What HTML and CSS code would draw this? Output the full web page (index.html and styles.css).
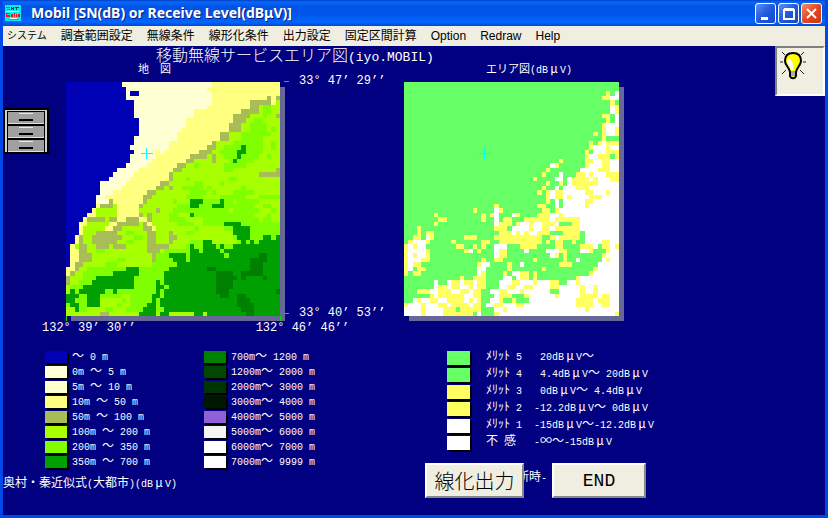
FILE: index.html
```html
<!DOCTYPE html>
<html lang="ja">
<head>
    <meta charset="UTF-8">
    <meta name="viewport" content="width=device-width, initial-scale=1.0">
    <title>Mobil</title>
    <link rel="stylesheet" href="styles.css">
</head>
<body>
    <header class="titlebar">
        <svg class="app-icon" width="16" height="16" viewBox="0 0 16 16" shape-rendering="crispEdges" aria-hidden="true">
            <rect width="16" height="16" fill="#00f0f0"/>
            <path d="M1 8h4v1h-3v1h3v2h-4zM6 9h2v3h-2zM9 8h1v4h-1zM11 9h1v3h-1zM13 9h2v3h-2z" fill="#d02020"/>
            <path d="M1 2h4v1h-4zM2 4h3v1h-3z" fill="#a06020"/>
            <path d="M6 2h1v3h-1zM8 2h1v3h-1zM6 3h3v1h-3zM10 2h4v1h-4zM11 3h1v2h-1z" fill="#104060"/>
            <path d="M1 6h13v1h-13zM5 13h7v1h-7z" fill="#f8fff8"/>
            <path d="M3 14h10v1h-10z" fill="#20c040"/>
        </svg>
        <h1>Mobil [SN(dB) or Receive Level(dBμV)]</h1>
        <div class="window-buttons">
            <button aria-label="Minimize"><svg width="19" height="19"><path d="M5 13h7v3h-7z" fill="#fff"/></svg></button>
            <button aria-label="Maximize"><svg width="19" height="19"><path d="M5 6h10v9h-10zM5 5h10" fill="none" stroke="#fff" stroke-width="2"/></svg></button>
            <button class="close" aria-label="Close"><svg width="19" height="19"><path d="M5 5l9 9M14 5l-9 9" stroke="#fff" stroke-width="2"/></svg></button>
        </div>
    </header>
    <nav class="menu">
        <button class="kana">システム</button>
        <button>調査範囲設定</button>
        <button>無線条件</button>
        <button>線形化条件</button>
        <button>出力設定</button>
        <button>固定区間計算</button>
        <button>Option</button>
        <button>Redraw</button>
        <button>Help</button>
    </nav>
    <main class="client">
        <h2>移動無線サービスエリア図<span class="mono">(iyo.MOBIL)</span></h2>

        <div class="maps">
            <div class="caption">地　図</div>
            <div class="caption area">エリア図<span class="mono">(dB<span class="w">μ</span>V)</span></div>
            <canvas id="terrain" width="214" height="234"></canvas>
            <div class="latitude">
                <span>33° 47’ 29’’</span>
                <span>33° 40’ 53’’</span>
            </div>
            <canvas id="area" width="215" height="234"></canvas>
        </div>
        <div class="longitude">
            <span>132° 39’ 30’’</span>
            <span>132° 46’ 46’’</span>
        </div>

        <div class="legends">
            <ul class="legend">
                <li><i class="sea"></i><span><span class="w">～</span> 0 m</span></li>
                <li><i class="h0"></i><span>0m <span class="w">～</span> 5 m</span></li>
                <li><i class="h5"></i><span>5m <span class="w">～</span> 10 m</span></li>
                <li><i class="h10"></i><span>10m <span class="w">～</span> 50 m</span></li>
                <li><i class="h50"></i><span>50m <span class="w">～</span> 100 m</span></li>
                <li><i class="h100"></i><span>100m <span class="w">～</span> 200 m</span></li>
                <li><i class="h200"></i><span>200m <span class="w">～</span> 350 m</span></li>
                <li><i class="h350"></i><span>350m <span class="w">～</span> 700 m</span></li>
            </ul>
            <ul class="legend">
                <li><i class="h700"></i><span>700m<span class="w">～</span> 1200 m</span></li>
                <li><i class="h1200"></i><span>1200m<span class="w">～</span> 2000 m</span></li>
                <li><i class="h2000"></i><span>2000m<span class="w">～</span> 3000 m</span></li>
                <li><i class="h3000"></i><span>3000m<span class="w">～</span> 4000 m</span></li>
                <li><i class="h4000"></i><span>4000m<span class="w">～</span> 5000 m</span></li>
                <li><i class="h5000"></i><span>5000m<span class="w">～</span> 6000 m</span></li>
                <li><i class="h6000"></i><span>6000m<span class="w">～</span> 7000 m</span></li>
                <li><i class="h6000"></i><span>7000m<span class="w">～</span> 9999 m</span></li>
            </ul>
            <ul class="legend merit">
                <li><i class="good"></i><b><span class="k">ﾒﾘｯﾄ</span> 5</b><span> 20dB<span class="w">μ</span>V<span class="w">～</span></span></li>
                <li><i class="good"></i><b><span class="k">ﾒﾘｯﾄ</span> 4</b><span> 4.4dB<span class="w">μ</span>V<span class="w">～</span> 20dB<span class="w">μ</span>V</span></li>
                <li><i class="fair"></i><b><span class="k">ﾒﾘｯﾄ</span> 3</b><span> 0dB<span class="w">μ</span>V<span class="w">～</span> 4.4dB<span class="w">μ</span>V</span></li>
                <li><i class="fair"></i><b><span class="k">ﾒﾘｯﾄ</span> 2</b><span>-12.2dB<span class="w">μ</span>V<span class="w">～</span> 0dB<span class="w">μ</span>V</span></li>
                <li><i class="poor"></i><b><span class="k">ﾒﾘｯﾄ</span> 1</b><span>-15dB<span class="w">μ</span>V<span class="w">～</span>-12.2dB<span class="w">μ</span>V</span></li>
                <li><i class="poor"></i><b><span class="k">不</span> <span class="k">感</span></b><span>-<span class="w">∞</span><span class="w">～</span>-15dB<span class="w">μ</span>V</span></li>
            </ul>
        </div>
        <footer>
            <p>奥村・秦近似式<span class="mono">(</span>大都市<span class="mono">)(dB<span class="w">μ</span>V)</span></p>
            <p class="cutoff">断時<span class="mono">-</span></p>
        </footer>

        <svg class="cabinet" width="45" height="46" viewBox="0 0 45 46" shape-rendering="crispEdges" aria-hidden="true">
            <path d="M0 0h45v46h-45z" fill="#000"/>
            <path d="M1 2h42v42h-42z" fill="#d0d0d0"/>
            <path d="M3 3h38v41h-38z" fill="#000"/>
            <path d="M4 4h36v11h-36zM4 18h36v11h-36zM4 32h36v11h-36z" fill="#a0a0a0"/>
            <path d="M4 15h36v1h-36zM4 29h36v1h-36zM4 43h36v1h-36z" fill="#e0e0e0"/>
            <path d="M15 11h14v2h-14zM15 25h14v2h-14zM15 39h14v2h-14z" fill="#000"/>
            <path d="M15 5h14v1h-14zM15 19h14v1h-14zM15 33h14v1h-14z" fill="#e8e8e8"/>
        </svg>
        <button class="hint" aria-label="Hint">
            <svg width="28" height="30" viewBox="0 0 28 30">
                <path d="M14 3C9 3 6 6 6 11c0 4 4 6 5 11v4c1 3 5 3 6 0v-4c1-5 5-7 5-11 0-5-3-8-8-8z" fill="#ff0" stroke="#000" stroke-width="2"/>
                <path d="M8 11c0 3 3 5 4 9h2v-6l-3-6z" fill="#fff"/>
                <path d="M12 21h4v5h-4z" fill="#aaa"/>
                <path d="M3 2l3 3M1 12h3M24 12h3M25 2l-3 3M3 24l4-4M25 24l-4-4" stroke="#222" fill="none"/>
            </svg>
        </button>
        <div class="actions">
            <button class="wide">線化出力</button>
            <button>END</button>
        </div>
    </main>
    <script src="map.js"></script>
</body>
</html>
```

FILE: styles.css
```css
body {
    margin: 0;
    min-height: 100vh;
    display: flex;
    flex-direction: column;
    box-sizing: border-box;
    background: #000080;
    color: #fff;
    font-family: "Noto Sans CJK JP", sans-serif;
    font-size: 12px;
    border: solid #0048e8;
    border-width: 0 3px 3px;
}
h1, h2, p, ul {
    margin: 0;
    padding: 0;
}
button {
    font-family: inherit;
    color: #000;
    padding: 0;
}
.mono, .legend, .latitude, .longitude {
    font-family: "Liberation Mono", "Noto Sans CJK JP", monospace;
}
/* full-width and half-width kana cells of the 12px grid */
.w, .k {
    font-family: "Noto Sans CJK JP", sans-serif;
    font-size: 12px;
    line-height: 12px;
}
.w {
    display: inline-block;
    width: 12px;
    text-align: center;
}

/* window frame */
.titlebar {
    display: flex;
    align-items: center;
    height: 26px;
    margin: 0 -3px;
    padding: 0 6px 0 5px;
    box-sizing: border-box;
    background: linear-gradient(#0040c8 0, #0a68f8 2px, #0054e4 6px, #0054e8 14px, #0066ff 22px, #0048d0 26px);
}
.titlebar h1 {
    flex: 1;
    margin-left: 10px;
    font-family: "Noto Sans", "Noto Sans CJK JP", sans-serif;
    font-size: 14px;
    line-height: 16px;
    text-shadow: 1px 1px 0 #002080;
}
.window-buttons {
    display: flex;
    gap: 2px;
}
.window-buttons button {
    width: 21px;
    height: 21px;
    border: 1px solid #fff;
    border-radius: 3px;
    background: linear-gradient(135deg, #6090f0, #2058e0 50%, #1848c8);
}
.window-buttons svg {
    display: block;
}
.window-buttons .close {
    background: linear-gradient(135deg, #f09070, #e04820 50%, #c83810);
}
.menu {
    display: flex;
    align-items: center;
    gap: 14px;
    height: 20px;
    padding-left: 4px;
    background: #f0eee0;
}
.menu button {
    border: none;
    background: none;
    font-family: "Liberation Sans", "Noto Sans CJK JP", sans-serif;
    font-size: 12px;
    line-height: 18px;
}
.menu .kana {
    font-size: 10px;
}

/* drawing area */
.client {
    flex: 1;
    position: relative;
}
h2 {
    height: 16px;
    padding-left: 153px;
    font-size: 16px;
    line-height: 16px;
    font-weight: 300;
}
h2 .mono {
    font-size: 13px;
}
.maps {
    display: grid;
    grid-template-columns: 214px 124px 215px;
    margin-left: 63px;
}
.caption {
    height: 20px;
    padding-left: 72px;
    font-size: 11px;
    line-height: 12px;
}
.caption.area {
    grid-column: 3;
    padding-left: 82px;
}
.caption .mono, footer .mono {
    font-size: 10px;
}
canvas {
    display: block;
    box-shadow: 5px 5px 0 #686898;
}
.latitude {
    display: flex;
    flex-direction: column;
    justify-content: space-between;
    margin: -8px 0 -4px 4px;
    font-size: 12px;
    line-height: 14px;
}
.latitude span {
    display: flex;
    align-items: center;
    gap: 10px;
}
.latitude span::before {
    content: "";
    width: 5px;
    height: 1px;
    background: #00e000;
}
.longitude {
    display: flex;
    gap: 120px;
    padding: 5px 0 0 39px;
    font-size: 12px;
    line-height: 14px;
}
.longitude span {
    position: relative;
}
.longitude span::before {
    content: "";
    position: absolute;
    left: 24px;
    top: -5px;
    width: 1px;
    height: 5px;
    background: #00e000;
}

/* legends */
.legends {
    display: grid;
    grid-template-columns: 159px 243px 1fr;
    align-items: start;
    margin: 14px 0 0 42px;
}
.legend {
    list-style: none;
    font-size: 10px;
}
.legend li {
    display: flex;
    align-items: center;
    height: 15px;
    line-height: 15px;
    white-space: pre;
}
.legend i {
    width: 22px;
    height: 12px;
    margin-right: 5px;
    box-shadow: 2px 2px 0 #000;
}
.merit li {
    height: 17px;
    line-height: 17px;
}
.merit i {
    width: 23px;
    height: 14px;
    margin-right: 16px;
}
.merit b {
    width: 48px;
    font-weight: normal;
}
.sea { background: #0000b4; }
.h0 { background: #ffffd8; }
.h5 { background: #ffffcc; }
.h10 { background: #ffff80; }
.h50 { background: #a8bc58; }
.h100 { background: #a8ff00; }
.h200 { background: #80ff00; }
.h350 { background: #00a000; }
.h700 { background: #008000; }
.h1200 { background: #004800; }
.h2000 { background: #003400; }
.h3000 { background: #001800; }
.h4000 { background: #9060d8; }
.h5000 { background: #f4f4f4; }
.h6000, .poor { background: #fff; }
.good { background: #66ff66; }
.fair { background: #ffff60; }

footer {
    display: flex;
    align-items: flex-start;
    line-height: 14px;
}
footer p:first-child {
    padding-top: 6px;
    width: 514px;
}

/* things floating over the drawing */
.cabinet {
    position: absolute;
    left: 1px;
    top: 62px;
}
.hint {
    position: absolute;
    right: 0;
    top: 0;
    width: 50px;
    height: 50px;
    border: 2px solid;
    border-color: #808080 #fff #fff #808080;
    background: #f0eee0;
}
.hint svg {
    position: absolute;
    left: 2px;
    top: 2px;
}
.actions {
    position: absolute;
    left: 422px;
    bottom: 17px;
    display: flex;
    gap: 28px;
}
.actions button {
    width: 94px;
    height: 35px;
    border: 2px solid;
    border-color: #fff #888 #888 #fff;
    background: #f0eee0;
    font-family: "Liberation Mono", "Noto Sans CJK JP", monospace;
    font-size: 18px;
}
.actions .wide {
    width: 99px;
    font-size: 20px;
    font-weight: 300;
    font-family: "Noto Sans CJK JP", sans-serif;
}
```

FILE: map.js
```js
// each row is a list of runs: colour letter + the column where the run ends
const terrainColors = {
    n: '#0000b4', c: '#ffffd4', y: '#ffff80', k: '#a8bc58', l: '#a8ff00',
    g: '#80ff00', m: '#00a000', f: '#008000'
};
const terrain = [
    'n13c34y50',
    'n14c33y50',
    'n14c15n17c34y50',
    'n14c34y47k48y49k50',
    'n16c34y43k48y49l50',
    'n16c33y43k45l46g48l50',
    'n16c30y41k45l46g48l50',
    'n16c30y39k43l46g47l49k50',
    'n17c28y39k42l44g46l50',
    'n17c28y38k41l43g47l50',
    'n17c27y38k41l43g47l48g49l50',
    'n17c26y36k38l41g48l50',
    'n16c26y36k38l41g46l50',
    'n16c24y34k35l39g46l48g49l50',
    'n15c24y33k35l37g41m42g46l48g49l50',
    'n16c21y22c23y31k34l36g40m42g46l50',
    'n15c21y29k33l34k35l37g40m41g45l47g48l50',
    'n15c20y28k30l34k35l38g39m40g44l50',
    'n14c19y26k28l30g31l37g42l50',
    'n12c17y25k27l37g39l49k50',
    'n11c16y24k25l45k50',
    'n10c15y24k25l28g29l38g40l50',
    'n8c14y22k24l30g32l36g37l50',
    'n8c13y21k23l24k25l27g32l33g34l41g42l50',
    'n8c11y19k21l29g33l34g35l39g44l50',
    'n7c9y18k20l28g32l36g42l45g50',
    'n7c10k11y18k19l25g26l29m32g36m37g39l40g45l50',
    'n7y8k11l12y17k18l26g29m31g34m37g44l46g48l50',
    'n6y7l12y17l21k22l25g38l39g45l48g49l50',
    'n5y7l12y17k18l19k20l24g26l29m30g44l47g48l50',
    'n4y5k9l10k12y14k17y19k20l24g28l32g45l46g48l50',
    'n3y5l10y12k14l14k17l18k19y20l26g30l32g37m41g50',
    'n3y4l9y11k13l18k20y21l30g31l37g39m43g50',
    'n3y4l7k12l14g16l19k21l24k25l28g30l39m43g50',
    'n2y3k4l6k13l16g18l19k21l24k26l39g40m43g46m48g49m50',
    'n2y3k4l6k12l14g16l19k21l24k25l29g32m34l40g41m42g43m44g45m50',
    'n1y2l3k5l7k10l11k14l19k24l28g29m30g32m35g36m37g39m50',
    'n1y3k5l7g9l19k22l23g29m31g32m36g37m50',
    'n1y3k6l20k21g24m28g29m37g38m45f47m50',
    'n1y3k6l12g14l20k21g25m28g29m43f47m50',
    'n1y2k4l9g12l20g26m43f46m50',
    'y2k3l5g14m17g24m33f35m43f46m50',
    'y1k2l4g11m17g23m35f39m41f46m50',
    'k1l4g7m16g23m35f40m41f42m46f47m50',
    'k1l3g6m16g21m22g23m35f39m50',
    'l1g4m16g21m23g24m35f39m50',
    'l1m2g3m9g11m12g21m22g23m35f38m49f50',
    'm3g5m8g13l15g20m22g23m36f38m40f42m50',
    'm2g5m8l13g14l15g20m21g22m40f43m50',
    'g1m3g5m8l12g13l15g19m21g22m40f44m50',
    'l2m3g5l9g11l14g18m21g23m41f44m50',
    'l8k10l17m21l22m24l30m32l33m42f44m50'
];

const areaColors = { g: '#66ff66', y: '#ffff60', w: '#ffffff' };
const area = [
    'g50',
    'g50',
    'g47y48g49w50',
    'g46y48w50',
    'g48y49g50',
    'g48w49y50',
    'g48w49y50',
    'g46y48g49w50',
    'g47y48g49w50',
    'g46y47w50',
    'g46y47w49y50',
    'g44y45g46y47w49y50',
    'g46y47g50',
    'g43y44g45y46w47y50',
    'g43y44w47y48w50',
    'g42y43g44w47y50',
    'g42y43w45y48g49y50',
    'g36y37g42y44w46y48w50',
    'g34w35y36g42y43w46y48w50',
    'g33y34g41w45y48w50',
    'g32y33g36w37g40y42w43y44w47y50',
    'g30y31g35w37g38w39y43w44y45w48y50',
    'g33y34g36y37g38w39y45w50',
    'g32y33g35w36g37w40y43w50',
    'g31y32g33y34w35y37w42y44w47y48w50',
    'g33y34w35y37w38y39w43y46w50',
    'g33y34g35w36g37w42y44w50',
    'g21y22g31y33g35w36g37w42y43w50',
    'g16y17g21w22y23g32y34g35y36w50',
    'g7y8g18y19g20y21w22g25w26y27g31y34w36y37w50',
    'g8y10g18y19g21w22g23y25g28y34w35y41w50',
    'g7y8g21w22y25g26y27w29y30w32y35w36g39y41w50',
    'g3y4g21y24g25w29y30w32y34w35y41w50',
    'g3y4g5y7g22y25w26y27w28y29w31y34g37y41g42w50',
    'g2y4g5w6y7g14y17g21y32g34y35w36y41g42w50',
    'g1y2w5y6g11y12g18y20g22y32g33y34g35y37g39y40g42w46y48w50',
    'y1w2y3w5g12y14g16y17g18y19g21w24g27y31g35y37g41y44w45g46y48w49y50',
    'y1w5y6g14y15w16g17y18g21w22y24g28w29g33w36y38g41w43y44g47y48w50',
    'y1w2y3w5y6g21w22y24g34w35y36g37y38g46y47w50',
    'y1w4y6g18y19g21y23g30y31g37y38g40w41g46w47y48w50',
    'y1w2y4g17y18w20g24y25g27w28g36y39g45w50',
    'y1w2g3y5g17w19g24y25g32y33g44y45w50',
    'y1g2y4g17w18y19g23y24g25w27y29g30y31g43y44w50',
    'g13y14g16y19g23w25g26w27y29g30y31g40y41w50',
    'g7w8g10w11y13w14y16w17y19g22w25y27w30y31w34y36g38w40y41w50',
    'g7w8y10w11y13w15y16w17y19g22w24y26w28y30w34y36w41y42w44y45w50',
    'g3y6w8y11w13y15w16y18g20w22y24w27y28w34g36w41y42w44y45w50',
    'g6y7w8y14w16y18g21w22y25g28y29w35y36w41y45w46y48w50',
    'g2w3y4w6y8w10y14w15y16w17y18g20w22y23g25y26g29w40y44w45y48w50',
    'y1w4y5w8y10w11y15w16y18g19w21y23w26y28w40y44w46y48w50',
    'w4y5w9y12g13y18g21w23y24w42y43w50',
    'w4y5w9y16g17w18g21y22w49y50'
];

function drawMap(id, rows, colors) {
    const canvas = document.getElementById(id);
    const ctx = canvas.getContext('2d');
    const cw = canvas.width / 50;
    const ch = canvas.height / rows.length;
    rows.forEach((row, r) => {
        let start = 0;
        const top = Math.round(r * ch);
        const bottom = Math.round((r + 1) * ch);
        for (const [, color, end] of row.matchAll(/([a-z])(\d+)/g)) {
            const left = Math.round(start * cw);
            ctx.fillStyle = colors[color];
            ctx.fillRect(left, top, Math.round(end * cw) - left, bottom - top);
            start = Number(end);
        }
    });
    // base station
    ctx.fillStyle = '#00ffff';
    ctx.fillRect(75, 71, 12, 1);
    ctx.fillRect(80, 66, 1, 11);
}

drawMap('terrain', terrain, terrainColors);
drawMap('area', area, areaColors);
```
